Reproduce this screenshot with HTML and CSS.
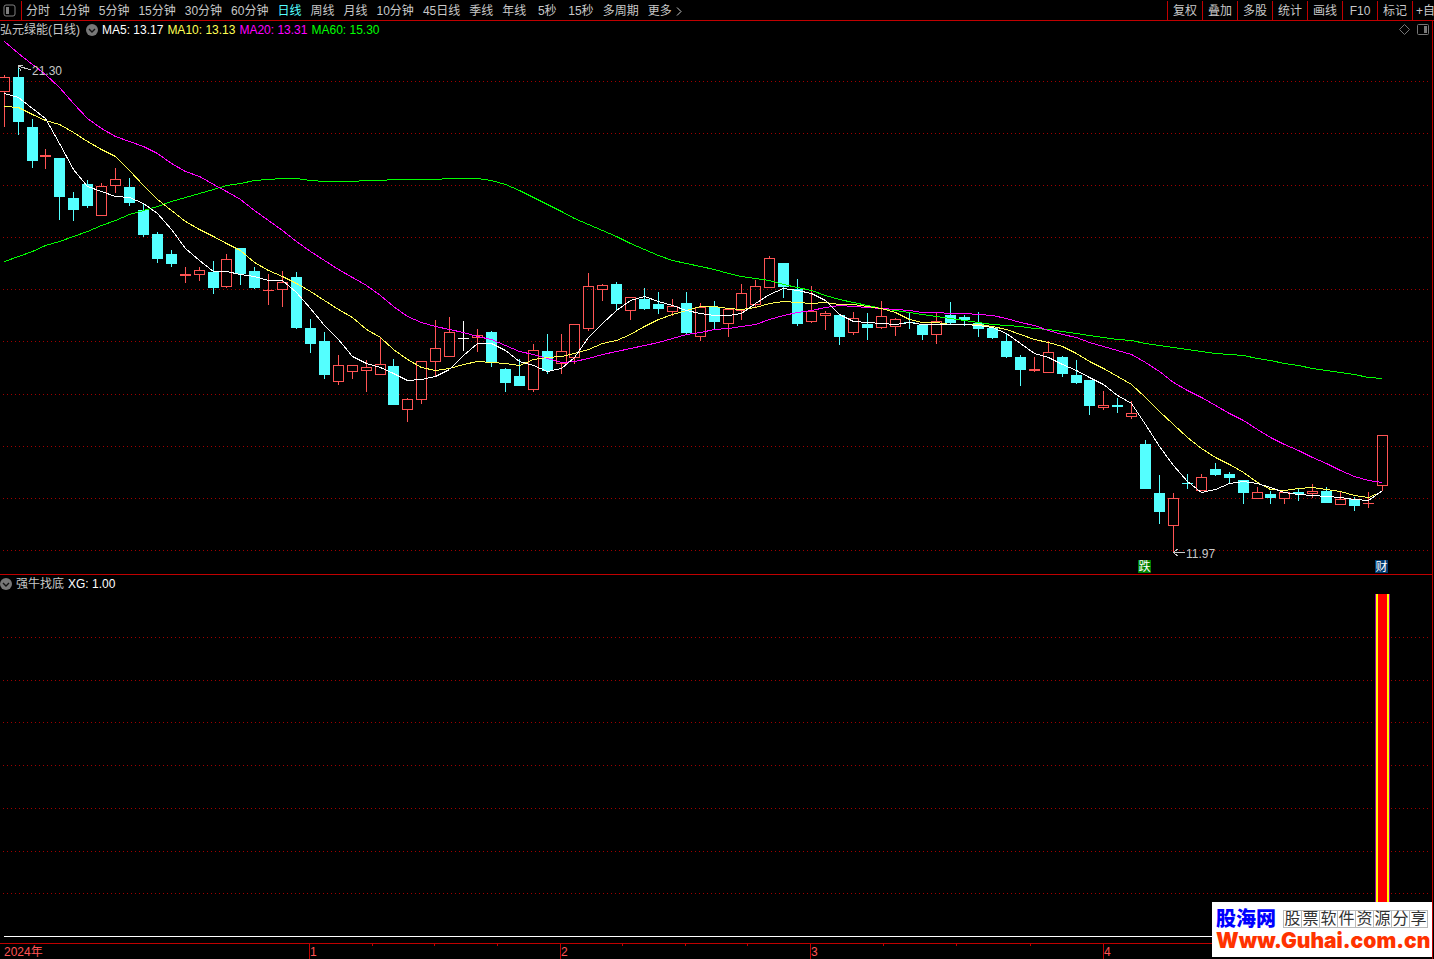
FILE: index.html
```html
<!DOCTYPE html>
<html lang="zh-CN">
<head>
  <meta charset="UTF-8">
  <meta name="viewport" content="width=device-width, initial-scale=1.0">
  <title>弘元绿能(日线)</title>
  <link rel="stylesheet" href="styles.css">
</head>
<body>
<nav class="toolbar">
  <button class="panel-btn" aria-label="侧栏">
    <svg width="13" height="13" viewBox="0 0 13 13">
      <rect x="1" y="1" width="11" height="11" rx="2" fill="none" stroke="#808080"/>
      <rect x="3" y="3" width="3" height="7" fill="#808080"/>
    </svg>
  </button>
  <div class="periods">
    <button>分时</button>
    <button>1分钟</button>
    <button>5分钟</button>
    <button>15分钟</button>
    <button>30分钟</button>
    <button>60分钟</button>
    <button class="active">日线</button>
    <button>周线</button>
    <button>月线</button>
    <button>10分钟</button>
    <button>45日线</button>
    <button>季线</button>
    <button>年线</button>
    <button>5秒</button>
    <button>15秒</button>
    <button>多周期</button>
    <button class="more">更多
      <svg width="6" height="9" viewBox="0 0 6 9"><path d="M1 0.5L5 4.5L1 8.5" fill="none" stroke="#c8c8c8"/></svg>
    </button>
  </div>
  <div class="tools">
    <button>复权</button>
    <button>叠加</button>
    <button>多股</button>
    <button>统计</button>
    <button>画线</button>
    <button>F10</button>
    <button>标记</button>
    <button class="cut">+自选</button>
  </div>
</nav>

<main class="charts">
  <section>
    <header class="legend">
      <span>弘元绿能(日线)</span>
      <button class="round-btn" aria-label="指标菜单">
        <svg width="12" height="12" viewBox="0 0 12 12"><circle cx="6" cy="6" r="6" fill="#777"/><path d="M3 5L6 8L9 5" fill="none" stroke="#111" stroke-width="1.4"/></svg>
      </button>
      <span class="ma5">MA5: 13.17</span>
      <span class="ma10">MA10: 13.13</span>
      <span class="ma20">MA20: 13.31</span>
      <span class="ma60">MA60: 15.30</span>
      <div class="corner">
        <svg width="11" height="11" viewBox="0 0 11 11"><path d="M5.5 0.5L10.5 5.5L5.5 10.5L0.5 5.5Z" fill="none" stroke="#777"/></svg>
        <svg width="12" height="11" viewBox="0 0 12 11"><rect x="0.5" y="0.5" width="11" height="10" rx="1" fill="none" stroke="#777"/><rect x="7" y="2" width="3" height="7" fill="#777"/></svg>
      </div>
    </header>
    <svg id="kline" class="plot" viewBox="0 40 1432 534">
      <g id="kline-grid" class="grid"></g>
      <g id="candles"></g>
      <g id="averages" class="averages"></g>
      <g class="notes">
        <path d="M31 70L18 66M18 66L23 65M18 66L21 71"/>
        <text x="32" y="75">21.30</text>
        <path d="M1185 552.5H1173M1173 552.5L1178 549M1173 552.5L1178 556"/>
        <text x="1186" y="558">11.97</text>
      </g>
      <rect x="1138" y="560" width="13" height="13" fill="#008000"/>
      <text class="flag" x="1144.5" y="571">跌</text>
      <rect x="1375" y="560" width="13" height="13" fill="#003a70"/>
      <text class="flag" x="1381.5" y="571">财</text>
    </svg>
  </section>

  <section class="signal">
    <header class="legend">
      <button class="round-btn" aria-label="指标菜单">
        <svg width="12" height="12" viewBox="0 0 12 12"><circle cx="6" cy="6" r="6" fill="#777"/><path d="M3 5L6 8L9 5" fill="none" stroke="#111" stroke-width="1.4"/></svg>
      </button>
      <span>强牛找底</span>
      <span class="ma5">XG: 1.00</span>
    </header>
    <svg class="plot" viewBox="0 592 1432 367">
      <g id="signal-grid" class="grid"></g>
      <rect x="4" y="936" width="1428" height="1" fill="#fff"/>
      <rect x="1375" y="594" width="15" height="343" fill="#a000a0"/>
      <rect x="1376" y="594" width="13" height="343" fill="#ff0"/>
      <rect x="1378" y="594" width="9" height="343" fill="#f00"/>
      <g id="axis" class="axis">
        <rect x="0" y="943" width="1432" height="1"/>
        <text x="4" y="956">2024年</text>
      </g>
    </svg>
  </section>
</main>

<a class="site-mark" href="#">
  <span class="site-row">
    <strong>股海网</strong>
    <span class="slogan"><span>股</span><span>票</span><span>软</span><span>件</span><span>资</span><span>源</span><span>分</span><span>享</span></span>
  </span>
  <span class="site-url">Www.Guhai.com.cn</span>
</a>

<script src="script.js"></script>
</body>
</html>
```
FILE: styles.css
```css
body {
  margin: 0;
  background: #000;
  color: #c8c8c8;
  font: 12px/18px "Liberation Sans", "Noto Sans CJK SC", sans-serif;
  position: relative;
  overflow-x: hidden;
}

button {
  margin: 0;
  padding: 0;
  border: 0;
  background: none;
  color: inherit;
  font: inherit;
  white-space: nowrap;
  cursor: pointer;
}

/* Toolbar */
.toolbar {
  display: flex;
  height: 19px;
  padding-top: 1px;
  border-bottom: 1px solid #c00000;
  overflow: hidden;
}

.panel-btn {
  width: 22px;
  flex: none;
  padding-right: 3px;
  border-right: 1px solid #c00000;
  line-height: 0;
}

.periods {
  display: flex;
  gap: 9px;
  padding-left: 4px;
}

.periods button {
  min-width: 24px;
  padding-top: 1px;
}

.periods .active {
  color: #54ffff;
}

.more {
  display: flex;
  align-items: center;
  gap: 4px;
}

.tools {
  display: flex;
  margin-left: auto;
}

.tools button {
  width: 35px;
  padding-top: 1px;
  box-sizing: border-box;
  border-left: 1px solid #c00000;
}

.tools .cut {
  width: 22px;
  padding-left: 3px;
  text-align: left;
  overflow: hidden;
}

/* Chart panels */
.charts {
  margin-right: 1px;
  border-right: 1px solid #c00000;
}

.legend {
  display: flex;
  align-items: center;
  gap: 4px;
  height: 17px;
  padding-bottom: 2px;
}

.signal {
  border-top: 1px solid #c00000;
}

.signal .legend {
  padding-bottom: 0;
}

.round-btn {
  display: flex;
}

.legend span + .round-btn {
  margin-left: 2px;
}

.corner {
  display: flex;
  gap: 7px;
  margin-left: auto;
  padding-right: 3px;
}

.ma5 {
  color: #fff;
}

.ma10 {
  color: #ffff54;
}

.ma20 {
  color: #f0f;
}

.ma60 {
  color: #0f0;
}

.plot {
  display: block;
  width: 100%;
  shape-rendering: crispEdges;
}

.plot text {
  font-size: 12px;
}

.grid line {
  stroke: #a00000;
  stroke-dasharray: 1 3;
}

.averages polyline {
  fill: none;
  stroke: currentColor;
}

.notes path {
  fill: none;
  stroke: #c8c8c8;
}

.notes text {
  fill: #c8c8c8;
}

.plot .flag {
  fill: #fff;
  text-anchor: middle;
}

.axis rect {
  fill: #c00000;
}

.axis text {
  fill: #ff5454;
}

/* Site mark over the lower right corner */
.site-mark {
  position: absolute;
  right: 2px;
  bottom: 2px;
  width: 220px;
  height: 55px;
  padding: 6px 4px 0;
  box-sizing: border-box;
  background: #fff;
  text-decoration: none;
  white-space: nowrap;
}

.site-row {
  display: flex;
  align-items: center;
  justify-content: space-between;
  height: 22px;
}

.site-row strong {
  color: #00f;
  font-size: 20px;
  font-weight: 900;
}

.slogan {
  display: flex;
  border-left: 1px solid #bbb;
}

.slogan span {
  width: 17px;
  border: solid #bbb;
  border-width: 1px 1px 1px 0;
  color: #333;
  font-size: 16px;
  line-height: 16px;
  text-align: center;
}

.site-url {
  display: block;
  color: #ff3300;
  font: 900 21px/22px Inter, sans-serif;
}
```
FILE: script.js
```js
const NS = 'http://www.w3.org/2000/svg';
const colors = { r: '#ff5454', c: '#54ffff', w: '#ffffff' };

// kind, high, body top, body bottom, low
const candles = [
  ['r',75,77,92,127], ['c',65,77,122,135], ['c',119,127,161,168], ['r',149,155,157,169], ['c',158,158,197,220],
  ['c',192,198,210,221], ['c',180,184,206,208], ['r',183,186,216,216], ['r',168,179,186,193], ['c',178,187,203,206],
  ['c',203,210,235,237], ['c',232,234,259,263], ['c',250,254,264,267], ['r',267,274,276,283], ['r',267,270,275,281],
  ['c',261,272,288,294], ['r',254,259,287,288], ['c',248,248,274,285], ['c',267,271,288,289], ['r',274,290,291,305],
  ['r',271,282,290,307], ['c',272,277,328,329], ['c',319,328,344,353], ['c',332,341,375,379], ['r',355,365,382,385],
  ['r',365,365,372,379], ['r',360,367,371,392], ['r',337,364,375,375], ['c',359,366,405,405], ['r',398,399,410,422],
  ['r',361,361,400,404], ['r',320,348,362,376], ['r',317,332,357,357], ['w',321,338,339,351], ['r',329,335,338,352],
  ['c',331,332,363,367], ['c',368,369,383,392], ['c',359,376,386,386], ['r',344,350,390,392], ['c',334,351,371,374],
  ['r',334,351,364,374], ['r',324,324,358,364], ['r',273,286,329,331], ['r',284,285,290,301], ['c',282,284,304,310],
  ['r',297,297,311,320], ['c',288,299,309,310], ['c',292,304,309,314], ['r',299,306,312,316], ['c',292,303,333,335],
  ['r',303,307,337,341], ['c',301,307,322,329], ['r',308,309,324,337], ['r',284,293,311,320], ['r',280,286,305,308],
  ['r',256,258,288,288], ['c',263,263,287,298], ['c',279,289,324,326], ['r',286,311,322,323], ['r',311,313,316,330],
  ['c',315,315,337,345], ['r',312,318,333,335], ['c',313,324,328,340], ['r',301,316,328,329], ['r',318,319,327,336],
  ['c',312,322,323,329], ['c',324,325,335,340], ['r',313,321,335,344], ['c',302,315,323,324], ['c',315,317,320,326],
  ['c',312,323,329,337], ['c',326,328,338,339], ['c',333,341,357,358], ['c',355,357,370,386], ['r',357,369,371,372],
  ['r',341,352,373,373], ['c',356,357,374,377], ['c',360,375,383,384], ['c',380,380,406,415], ['r',391,405,408,410],
  ['c',398,405,407,413], ['r',401,413,417,419], ['c',440,444,489,489], ['c',475,493,512,524], ['r',493,498,526,552],
  ['c',474,483,484,489], ['r',474,477,491,491], ['c',463,469,475,476], ['c',472,474,478,484], ['c',480,480,493,504],
  ['r',487,492,499,499], ['c',491,494,498,504], ['r',492,492,499,504], ['c',489,492,494,501], ['r',484,491,494,498],
  ['c',487,491,503,503], ['r',492,499,505,505], ['c',497,499,506,511], ['r',492,503,504,508], ['r',435,435,486,491]
];

const averages = {
  ma60: [261,256,251,245,241,236,231,225,220,214,210,206,201,197,193,189,185,183,180,179,178,178,180,181,181,181,180,180,179,179,
    179,179,178,178,178,180,184,190,197,204,211,218,224,230,236,243,249,255,260,263,266,269,273,276,278,280,284,287,290,295,
    299,302,305,308,310,312,314,316,318,320,322,324,325,326,328,329,331,333,335,337,339,340,343,345,347,349,351,353,354,355,
    358,360,363,365,368,370,372,374,377,378],
  ma20: [41,53,64,74,87,103,118,128,136,141,146,153,163,171,176,184,191,199,210,220,230,241,251,260,269,277,285,295,306,316,
    322,326,329,332,336,339,345,351,354,358,362,361,358,354,351,348,345,342,338,334,332,329,328,326,324,319,315,312,310,307,
    305,306,307,308,309,310,312,312,313,313,314,315,318,322,325,330,334,337,342,346,350,354,362,371,382,390,397,405,413,420,
    429,437,444,450,457,463,470,476,480,482],
  ma10: [106,107,114,120,124,132,141,149,156,170,185,199,210,221,229,236,243,250,262,270,276,283,291,300,309,317,329,337,349,359,
    367,370,368,364,361,362,363,365,359,357,356,353,349,343,340,334,326,319,314,310,306,306,308,309,307,303,301,302,303,302,
    304,304,306,308,312,319,322,322,324,324,324,326,329,334,339,342,346,353,361,368,376,384,397,411,424,437,448,457,464,472,
    482,489,490,488,487,489,491,495,497,491],
  ma5: [93,97,108,118,143,169,186,191,196,197,203,213,229,248,260,271,271,274,276,280,280,292,308,325,339,356,363,367,373,380,
    379,376,369,355,343,343,350,361,365,371,368,357,337,323,310,300,296,301,305,310,313,315,315,313,303,294,288,290,293,300,
    314,321,322,323,324,322,324,324,324,324,325,327,333,343,353,357,364,370,377,384,395,403,424,446,465,481,492,489,483,481,
    483,487,492,494,495,496,497,499,500,490]
};

function add(parent, tag, attrs) {
  const el = document.createElementNS(NS, tag);
  for (const key in attrs) el.setAttribute(key, attrs[key]);
  parent.appendChild(el);
  return el;
}

function xAt(i) {
  return Math.floor(4.2 + i * 13.92);
}

function drawGrid(id, rows) {
  const grid = document.getElementById(id);
  rows.forEach(y => add(grid, 'line', { x1: 3, x2: 1430, y1: y + 0.5, y2: y + 0.5 }));
}

function drawCandles() {
  const group = document.getElementById('candles');
  candles.forEach(([kind, high, top, bottom, low], i) => {
    const x = xAt(i);
    const fill = colors[kind];
    if (top > high) add(group, 'rect', { x, y: high, width: 1, height: top - high, fill });
    if (low > bottom) add(group, 'rect', { x, y: bottom, width: 1, height: low - bottom, fill });
    if (kind === 'r' && bottom - top > 2) {
      add(group, 'rect', { x: x - 4.5, y: top + 0.5, width: 10, height: bottom - top - 1, fill: 'none', stroke: fill });
    } else {
      add(group, 'rect', { x: x - 5, y: top, width: 11, height: bottom - top, fill });
    }
  });
}

function drawAverages() {
  const group = document.getElementById('averages');
  for (const name in averages) {
    const points = averages[name].map((y, i) => `${xAt(i) + 0.5},${y + 0.5}`).join(' ');
    add(group, 'polyline', { class: name, points });
  }
}

function drawAxis() {
  const axis = document.getElementById('axis');
  [[309, 1], [560, 2], [810, 3], [1103, 4]].forEach(([x, month]) => {
    add(axis, 'rect', { x, y: 943, width: 1, height: 16 });
    add(axis, 'text', { x: x + 1, y: 956 }).textContent = month;
  });
  [372, 434, 497, 622, 685, 747, 883, 956, 1030].forEach(x => add(axis, 'rect', { x, y: 943, width: 1, height: 3 }));
}

drawGrid('kline-grid', [81, 133, 185, 237, 289, 341, 394, 446, 498, 550]);
drawGrid('signal-grid', [637, 680, 722, 765, 808, 851, 893]);
drawCandles();
drawAverages();
drawAxis();
```
